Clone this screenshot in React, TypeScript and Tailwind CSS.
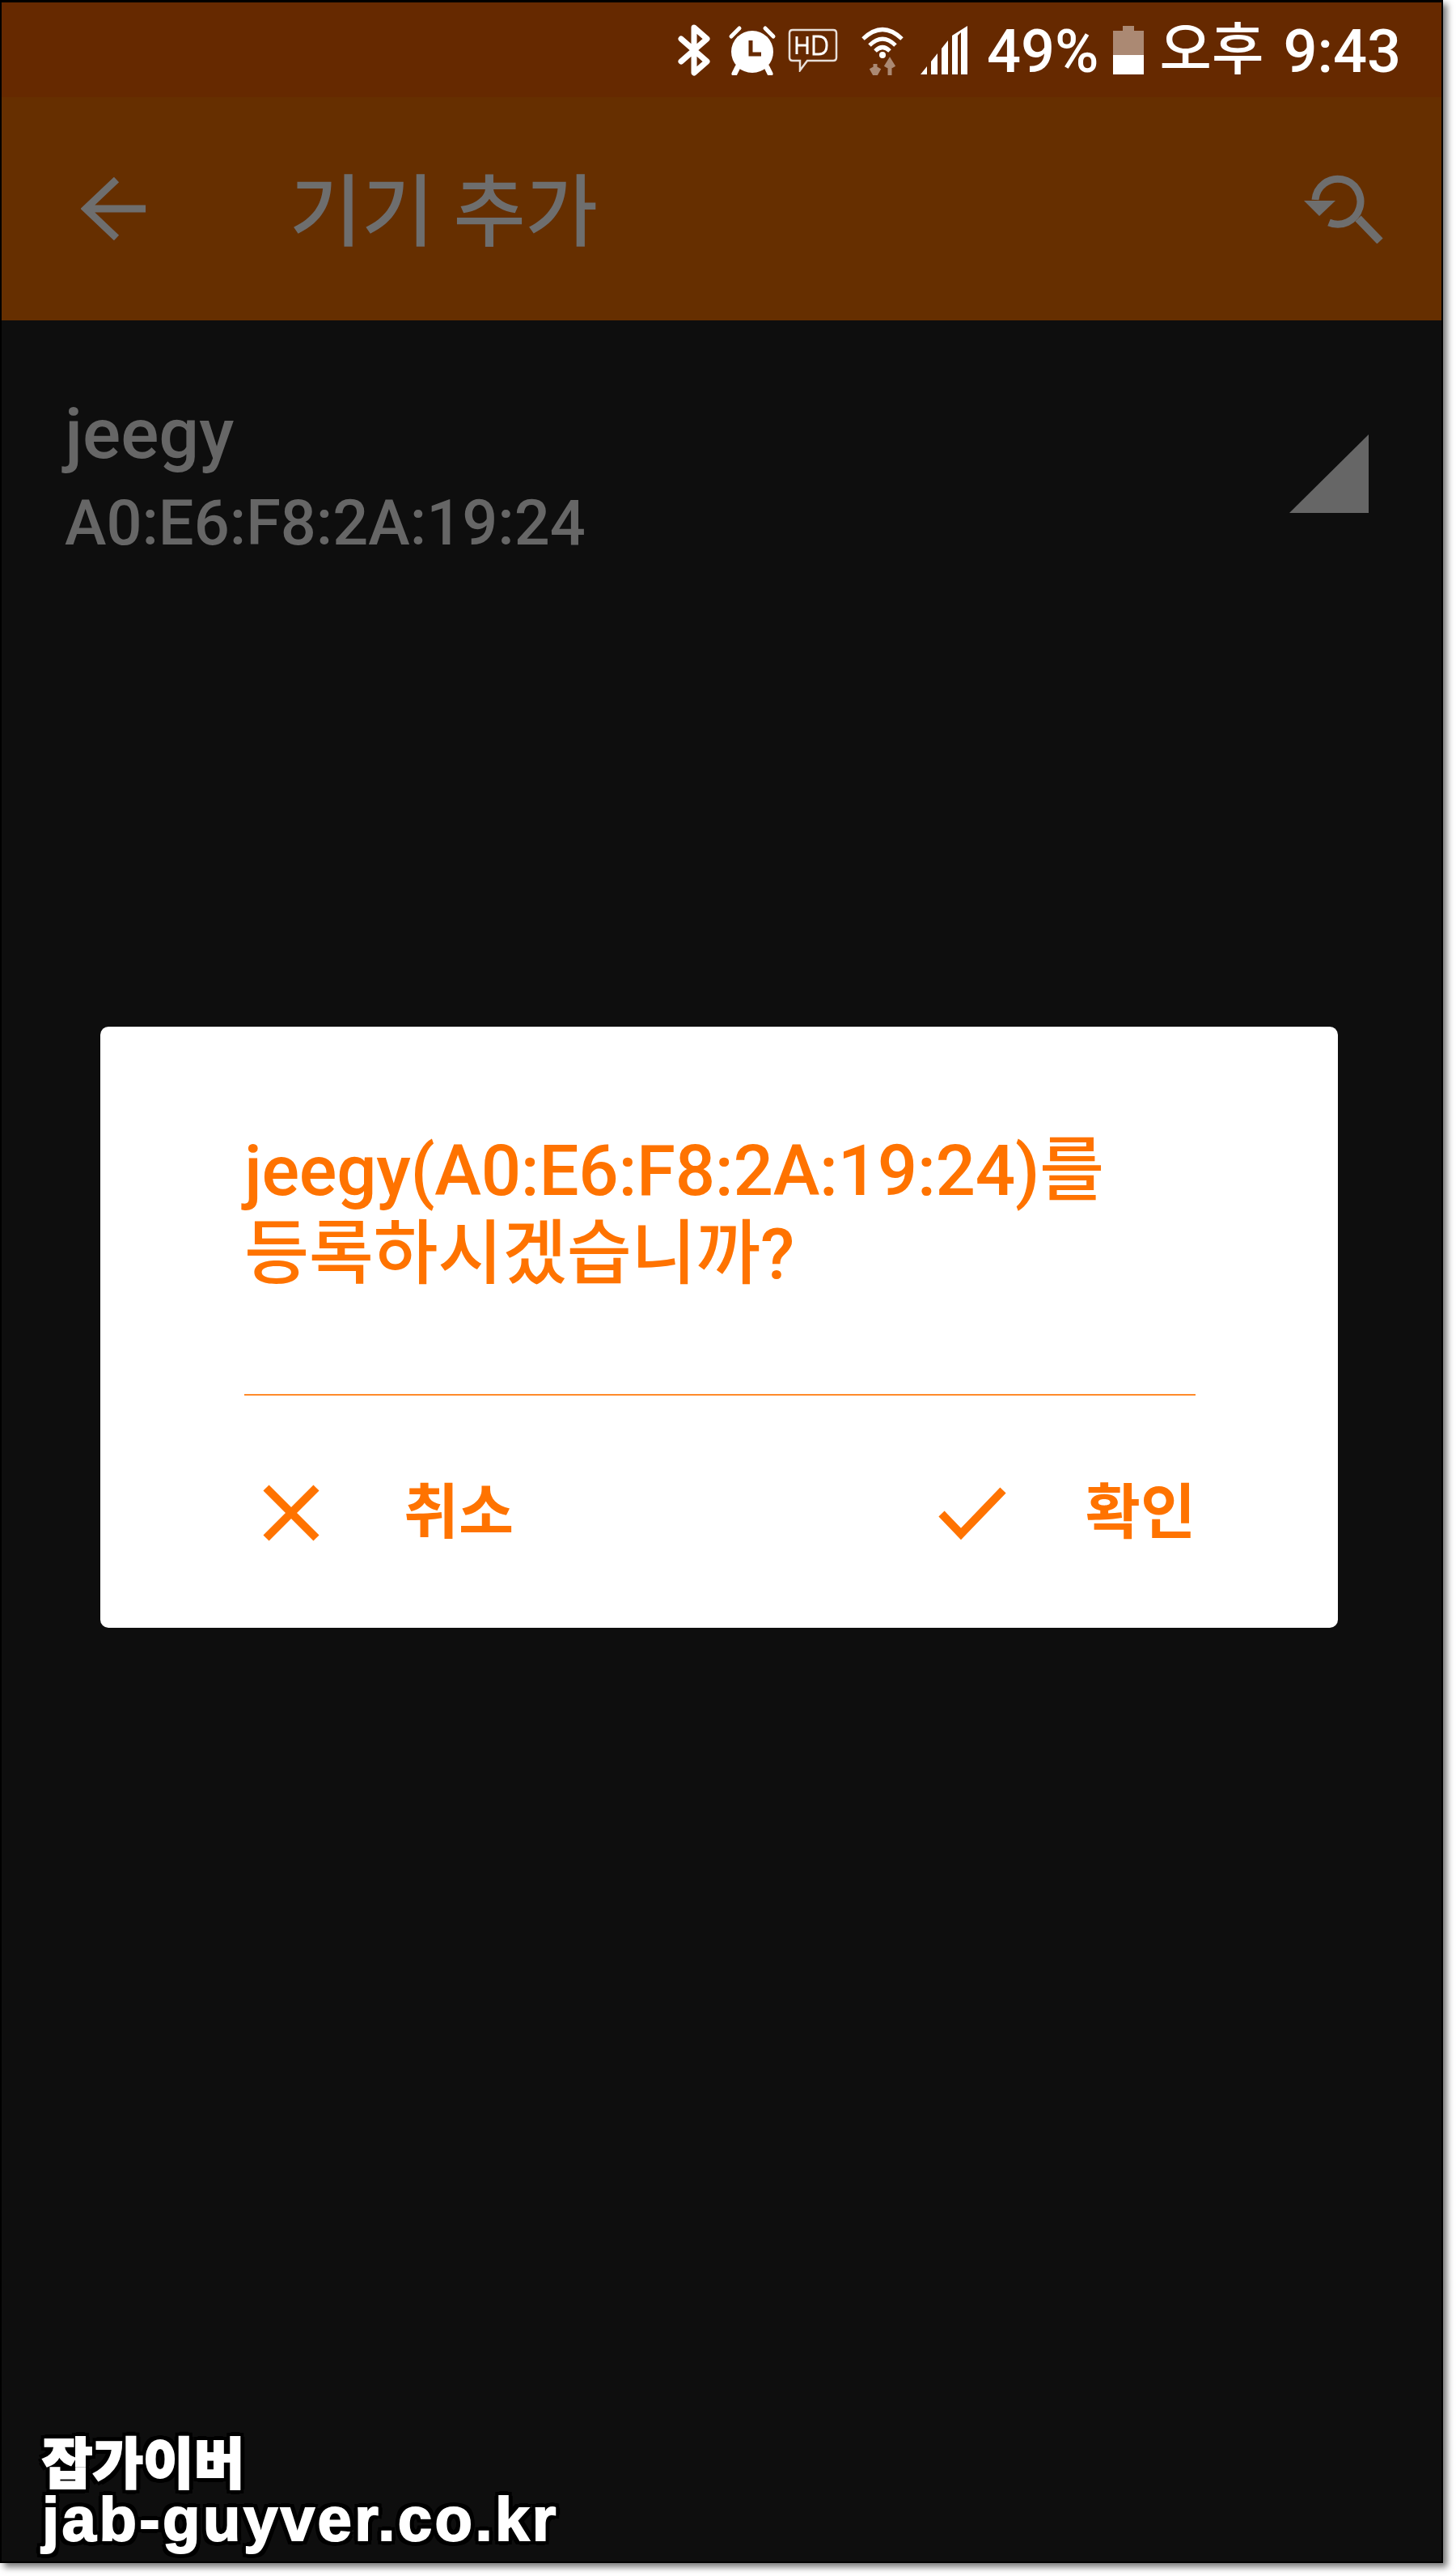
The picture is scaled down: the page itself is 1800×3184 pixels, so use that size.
import React from 'react';

const sans = 'font-["Roboto","Noto_Sans_CJK_KR",sans-serif]';

const BluetoothIcon = () => (
    <svg width="41" height="64" viewBox="0 0 41 64" className="text-white">
        <path d="M4 18 L36 46 L20 60 L20 4 L36 18 L4 46" fill="none" stroke="currentColor" strokeWidth="7" strokeLinejoin="round" strokeLinecap="round" />
    </svg>
);

const AlarmIcon = () => (
    <svg width="60" height="62" viewBox="0 0 60 62">
        <circle cx="30" cy="33" r="26" fill="#fff" />
        <path d="M4 14 L14 4 M46 4 L56 14" stroke="#fff" strokeWidth="5" strokeLinecap="round" />
        <path d="M12 52 L8 60 M48 52 L52 60" stroke="#fff" strokeWidth="7" strokeLinecap="round" />
        <path d="M28 19 V36 H41" fill="none" stroke="#662900" strokeWidth="5" />
    </svg>
);

const HdIcon = () => (
    <svg width="62" height="54" viewBox="0 0 62 54">
        <path d="M6 2 H56 Q60 2 60 6 V36 Q60 40 56 40 H24 L15 52 V40 H6 Q2 40 2 36 V6 Q2 2 6 2 Z" fill="none" stroke="#fff" strokeOpacity="0.85" strokeWidth="2.5" />
        <path d="M11 10 V32 M24 10 V32 M11 21 H24" fill="none" stroke="#fff" strokeWidth="3" />
        <path d="M32 10 V32 H38 Q48 32 48 21 Q48 10 38 10 Z" fill="none" stroke="#fff" strokeWidth="3" />
    </svg>
);

const WifiIcon = () => (
    <svg width="54" height="62" viewBox="0 0 54 62">
        <path d="M3 17 Q27 -6 51 17" fill="none" stroke="#fff" strokeWidth="5" />
        <path d="M11 25 Q27 9 43 25" fill="none" stroke="#fff" strokeWidth="5" />
        <path d="M18 32 Q27 23 36 32" fill="none" stroke="#fff" strokeWidth="5" />
        <circle cx="27" cy="37" r="4" fill="#fff" />
        <path d="M18 62 V48 M13 53 L18 62 L23 53" fill="none" stroke="#fff" strokeOpacity="0.45" strokeWidth="5" />
        <path d="M36 62 V44 M31 52 L36 44 L41 52" fill="none" stroke="#fff" strokeOpacity="0.45" strokeWidth="5" />
    </svg>
);

const SignalIcon = () => (
    <svg width="60" height="60" viewBox="0 0 60 60" fill="#fff">
        <path d="M0 60 L8 50 V60 Z" />
        <path d="M13 60 V44 L21 34 V60 Z" />
        <path d="M26 60 V28 L34 18 V60 Z" />
        <path d="M39 60 V12 L58 0 V60 H50 V8 L46 12 V60 Z" />
    </svg>
);

const BatteryIcon = () => (
    <svg width="38" height="60" viewBox="0 0 38 60" fill="#fff">
        <path d="M12 0 H26 V6 H38 V36 H0 V6 H12 Z" fillOpacity="0.45" />
        <rect y="36" width="38" height="24" />
    </svg>
);

const BackIcon = () => (
    <svg width="80" height="78" viewBox="0 0 80 78" className="text-[#6e6e6e]">
        <path d="M44 3 L6 39 L44 75 M6 39 H80" fill="none" stroke="currentColor" strokeWidth="9" />
    </svg>
);

const RefreshSearchIcon = () => (
    <svg width="98" height="86" viewBox="0 0 98 86" className="text-[#6e6e6e]">
        <path d="M14 32 A28 28 0 1 1 31 60" fill="none" stroke="currentColor" strokeWidth="9" />
        <path d="M0 33 H39 L19 52 Z" fill="currentColor" />
        <path d="M67 55 L94 83" fill="none" stroke="currentColor" strokeWidth="10" />
    </svg>
);

const RssiIcon = () => (
    <svg width="98" height="97" viewBox="0 0 98 97">
        <path d="M0 97 L98 0 V97 Z" fill="#666666" />
    </svg>
);

const App: React.FC = () => {
    return (
        <div className="w-[1800px] h-[3184px] bg-white">
            <div className={`relative flex flex-col w-[1784px] h-[3168px] border-x-2 border-t-[3px] border-b-2 border-black bg-[#0e0e0e] shadow-[5px_5px_8px_#777777] ${sans}`}>
                <div className="flex items-center h-[117px] pl-[836px] bg-[#662900] text-white">
                    <BluetoothIcon />
                    <div className="ml-[21px]"><AlarmIcon /></div>
                    <div className="ml-[14px]"><HdIcon /></div>
                    <div className="ml-[28px]"><WifiIcon /></div>
                    <div className="ml-[20px]"><SignalIcon /></div>
                    <span className="ml-[22px] mt-[4px] text-[74px] leading-none font-medium">49%</span>
                    <div className="ml-[17px]"><BatteryIcon /></div>
                    <span className="ml-[20px] text-[70px] leading-none font-medium">오후</span>
                    <span className="ml-[24px] mt-[4px] text-[74px] leading-none font-medium">9:43</span>
                </div>

                <div className="flex items-center h-[276px] pl-[98px] pr-[72px] bg-[#662f00]">
                    <BackIcon />
                    <h1 className="ml-[178px] mt-[10px] flex-1 text-[97px] leading-none font-medium text-[#6e6e6e]">기기 추가</h1>
                    <RefreshSearchIcon />
                </div>

                <div className="flex items-start justify-between pl-[78px] pr-[90px] pt-[89px]">
                    <div className="text-[#666666]">
                        <div className="text-[88px] leading-[102px] font-medium">jeegy</div>
                        <div className="mt-[10px] text-[77.5px] leading-[100px] font-medium">A0:E6:F8:2A:19:24</div>
                    </div>
                    <div className="mt-[52px]"><RssiIcon /></div>
                </div>

                <div className="mt-[572px] ml-[122px] w-[1530px] h-[743px] rounded-[10px] bg-white pl-[178px] pr-[176px] text-[#ff7300]">
                    <p className="pt-[127px] text-[87px] leading-[103px] font-medium tracking-[-0.3px]">
                        jeegy(A0:E6:F8:2A:19:24)를
                        <br />
                        등록하시겠습니까?
                    </p>
                    <div className="mt-[121px] h-[2px] bg-[#ff8a2a]" />
                    <div className="flex items-center justify-between pt-[108px]">
                        <div className="flex items-center">
                            <svg width="72" height="72" viewBox="0 0 72 72" className="ml-[22px]">
                                <path d="M5 5 L67 67 M67 5 L5 67" stroke="#ff7300" strokeWidth="10" />
                            </svg>
                            <span className="ml-[103px] text-[74px] leading-none font-bold">취소</span>
                        </div>
                        <div className="flex items-center">
                            <svg width="88" height="68" viewBox="0 0 88 68" className="-ml-[2px]">
                                <path d="M4 35 L28 60 L80 6" fill="none" stroke="#ff7300" strokeWidth="10" />
                            </svg>
                            <span className="ml-[94px] text-[74px] leading-none font-bold">확인</span>
                        </div>
                    </div>
                </div>

                <div className="absolute left-[50px] top-[3000px] text-white font-black [-webkit-text-stroke:2px_#fff] [text-shadow:6px_0_#000,-6px_0_#000,0_6px_#000,0_-6px_#000,5px_5px_#000,-5px_5px_#000,5px_-5px_#000,-5px_-5px_#000]">
                    <div className='font-["Noto_Sans_CJK_KR",sans-serif] text-[68px] leading-[76px]'>잡가이버</div>
                    <div className='font-["Liberation_Sans",sans-serif] font-bold text-[76px] leading-[70px] tracking-[3.5px]'>jab-guyver.co.kr</div>
                </div>
            </div>
        </div>
    );
};

export default App;
